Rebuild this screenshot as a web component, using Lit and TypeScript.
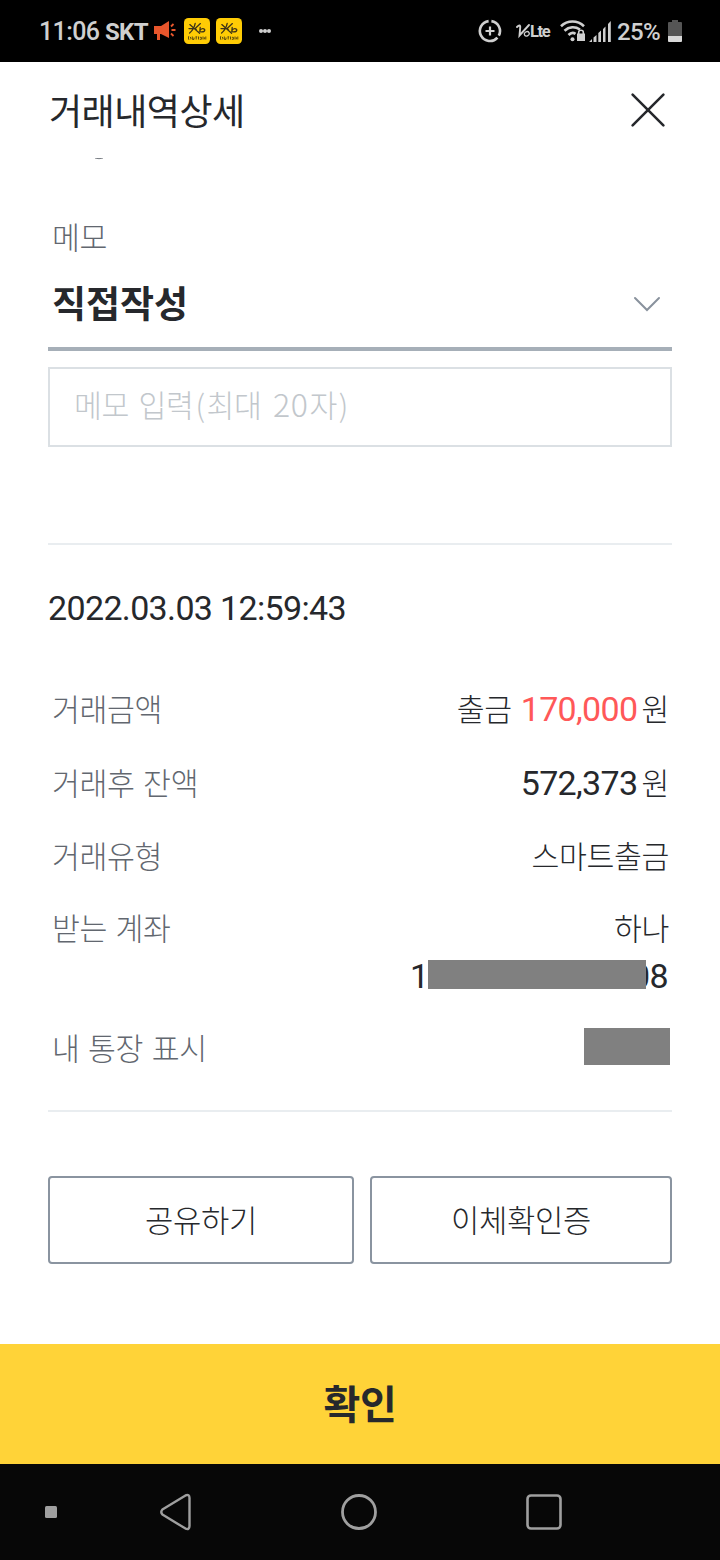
import { LitElement, html, css, svg } from "lit";
import { customElement, property } from "lit/decorators.js";

const kbMark = svg`
  <rect width="26" height="26" rx="4.5" fill="#ffcc05"/>
  <g fill="none" stroke="#3b3218" stroke-width="1.3" stroke-linecap="round" stroke-linejoin="round">
    <path d="M5.8 6.6L15.6 15.2M5 10.6H11.4M11.2 5.4C10.4 9.5 8.6 12.6 5.6 15M16.4 5.6L11.2 10.4L12.4 12"/>
    <path d="M16.2 9.4L15.8 13.6C19.8 14.6 21.6 12.8 20.4 11.2C19 10 17 10.8 16 12.4"/>
  </g>
  <path d="M4.5 18.3V21.6M6 18.8L7 20.2L6 21.5M8.3 18.5V21.4H10V19.5M11.5 18.8H13.2M12.2 19V21.5M14.5 18.5V21.5M15.8 19.3H17.4V21.3H15.8M19 18.5V21.5M20.4 19.3V21.3M21.8 18.5V21.5" fill="none" stroke="#4d400f" stroke-width=".9"/>`;

@customElement("phone-status-bar")
export class PhoneStatusBar extends LitElement {
  static styles = css`
    :host { display: flex; height: 62px; background: #000; color: #cfcfcf; align-items: center;
      font-family: Roboto, sans-serif; font-size: 25px; line-height: 62px; white-space: nowrap; }
    .left, .right { display: flex; align-items: center; height: 62px; }
    .left { padding-left: 39px; flex: 1; }
    .right { padding-right: 38px; }
    .time { width: 66px; font-weight: 500; letter-spacing: -0.6px; padding-top: 2px; }
    .carrier { width: 48px; font-weight: 700; font-size: 24px; letter-spacing: -0.7px; padding-top: 2px; }
    .battery { width: 51px; font-weight: 500; font-size: 24px; letter-spacing: -0.6px; padding-top: 2px; }
    svg { display: block; flex: none; }
    .horn { margin-right: 7px; }
    .kb { margin-right: 6px; }
    .dots { margin-left: 11px; }
    .saver { margin-right: 14px; }
    .lte { width: 30px; font-size: 16.5px; font-weight: 700; letter-spacing: -1.4px; padding-top: 2px; }
    .wifi { margin-right: 4px; }
    .signal { margin-right: 6px; }
  `;
  render() {
    return html`
      <div class="left">
        <span class="time">11:06</span>
        <span class="carrier">SKT</span>
        <svg class="horn" width="24" height="22" viewBox="0 0 24 22">
          <path d="M1 6H8L16 1V18L8 14H7V20H4V14H1Z" fill="#e8562c"/>
          <path d="M18 6.5L20.5 4M18.5 10H22.5M18 13.5L20.5 16" stroke="#e8562c" stroke-width="1.8"/>
        </svg>
        <svg class="kb" width="26" height="26" viewBox="0 0 26 26">${kbMark}</svg>
        <svg class="kb" width="26" height="26" viewBox="0 0 26 26">${kbMark}</svg>
        <svg class="dots" width="12" height="4" viewBox="0 0 12 4">
          <path d="M2 2H10" stroke="#777"/><circle cx="2" cy="2" r="2" fill="#cfcfcf"/><circle cx="6" cy="2" r="2" fill="#cfcfcf"/><circle cx="10" cy="2" r="2" fill="#cfcfcf"/>
        </svg>
      </div>
      <div class="right">
        <svg class="saver" width="24" height="24" viewBox="0 0 24 24" fill="none" stroke="#cfcfcf">
          <path d="M10.6 2.1A10 10 0 1 0 19.4 18.6M13.4 2.1A10 10 0 0 1 20.8 16.7" stroke-width="2.6"/>
          <path d="M12 7.5V16.5M7.5 12H16.5" stroke-width="2.2"/>
        </svg>
        <svg width="14" height="16" viewBox="0 0 14 16">
          <g fill="none" stroke="#cfcfcf" stroke-linecap="round">
            <path d="M1 4C3 2 4.5 2 4.2 4.5L3.5 12.5L13 2" stroke-width="1.9"/>
            <ellipse cx="10.8" cy="10.8" rx="2.5" ry="2.1" transform="rotate(-30 10.8 10.8)" stroke-width="1.3"/>
          </g>
        </svg>
        <span class="lte">Lte</span>
        <svg class="wifi" width="25" height="24" viewBox="0 0 25 24">
          <g fill="none" stroke="#cfcfcf" stroke-width="2.6">
            <path d="M1 7.2C7.5 .9 17.5 .9 24 7.2M4.5 11.7C9 7.6 15 7.2 20 10.5M8.5 16C10.8 13.6 13.4 13.4 15.5 14.8"/>
          </g>
          <circle cx="12.5" cy="20.2" r="2" fill="#cfcfcf"/>
          <path d="M17 14.5H25V22H17Z" fill="#cfcfcf"/>
          <path d="M18.7 15V13.2C18.7 10.5 23.3 10.5 23.3 13.2V15" fill="none" stroke="#cfcfcf" stroke-width="1.6"/>
        </svg>
        <svg class="signal" width="22" height="22" viewBox="0 0 22 22" fill="#cfcfcf">
          <path d="M0 22L3 19V22ZM4.5 17.5L7.5 15V22H4.5ZM9.3 13L12 10.5V22H9.3ZM14 9L16.5 6.5V22H14ZM19 4L21.8 1V22H19Z"/>
        </svg>
        <span class="battery">25%</span>
        <svg width="14" height="22" viewBox="0 0 14 22">
          <path d="M4 0H10V2H13Q14 2 14 3V16H0V3Q0 2 1 2H4Z" fill="#555"/>
          <path d="M0 16H14V21Q14 22 13 22H1Q0 22 0 21Z" fill="#d8d8d8"/>
        </svg>
      </div>`;
  }
}

@customElement("detail-row")
export class DetailRow extends LitElement {
  @property() label = "";
  static styles = css`
    :host { display: flex; justify-content: space-between; align-items: flex-start;
      padding: 0 4px 0 4px; white-space: nowrap; }
    .label { color: #62676f; margin-top: -1px; }
    .value { display: flex; flex-direction: column; align-items: flex-end; }
  `;
  render() {
    return html`<span class="label">${this.label}</span><div class="value"><slot></slot></div>`;
  }
}

@customElement("app-root")
export class AppRoot extends LitElement {
  static styles = css`
    :host { display: flex; flex-direction: column; width: 720px; height: 1560px; overflow: hidden;
      background: #fff; color: #26282c; font-family: "Noto Sans CJK KR", sans-serif;
      font-size: 30.3px; font-weight: 300; letter-spacing: -0.35px; word-spacing: 2.2px; }
    * { box-sizing: border-box; }
    svg { display: block; flex: none; }
    .head { display: flex; height: 96px; padding: 0 54px 0 49px; align-items: center; justify-content: space-between; }
    h1 { margin: 0; font-size: 36px; line-height: 94px; height: 96px; font-weight: 400; letter-spacing: -0.5px; }
    .body { display: flex; flex-direction: column; height: 1186px; padding: 0 48px; }
    .scrolled { margin-left: 46px; }
    .memo-label { height: 60px; line-height: 58px; margin-top: 47px; padding-left: 4px; color: #62676f; }
    .select { display: flex; align-items: center; justify-content: space-between; height: 84px;
      border-bottom: 4px solid #a6afb8; padding: 0 11px 7px 4px; font-size: 37px; font-weight: 600; line-height: 72px; letter-spacing: 0; }
    .select span { margin-top: -3px; }
    .input { height: 80px; margin-top: 16px; border: 2px solid #dbe0e4; padding-left: 24px; line-height: 69px; color: #c2c7cc; word-spacing: 3.2px; }
    .input .digits { letter-spacing: 0.6px; font-size: 32px; margin: 0 1px 0 2px; }
    .input .paren { margin: 0 1.8px; }
    .rule { height: 2px; background: #e9edf0; flex: none; }
    .gap { height: 96px; }
    .date { height: 127px; line-height: 127px; }
    .num { font-family: Roboto, sans-serif; font-size: 34px; font-weight: 400; letter-spacing: -0.65px; word-spacing: 0; }
    .red { color: #ff5858; }
    .r74 { height: 74px; line-height: 74px; }
    .r72 { height: 72px; line-height: 72px; }
    .account { height: 120px; padding-top: 12px; line-height: 48px; }
    .raise { display: block; margin: -1px -1px 1px 0; }
    .amount { display: flex; }
    .amount .num { margin-right: 4px; }
    .amount .kind { margin-right: 9px; }
    .masked { display: block; position: relative; width: 258px; height: 48px; text-align: right; }
    .masked .first { position: absolute; left: 0; }
    .mask { background: #808080; display: block; }
    .mask.number { position: absolute; left: 18px; top: 8px; width: 218px; height: 29px; }
    .mask.name { width: 86px; height: 37px; margin: 16px -2px 0 0; }
    .last { height: 98px; line-height: 73px; }
    .buttons { display: grid; grid-template-columns: 306px 302px; gap: 16px; margin-top: 64px; }
    button { font: inherit; letter-spacing: inherit; color: inherit; margin: 0; padding: 0; background: #fff; }
    .outline { height: 88px; border: 2px solid #8a94a0; border-radius: 4px; font-size: 30.8px; line-height: 80px; padding-bottom: 3px; }
    .confirm { height: 120px; border: 0; background: #ffd338; font-size: 40px; font-weight: 600; line-height: 112px; padding-bottom: 5px; }
    .nav { display: flex; align-items: center; height: 96px; background: #070707; padding-left: 45px; }
    .back { margin-left: 102px; }
    .home { margin-left: 149px; }
    .recent { margin-left: 149px; }
  `;
  render() {
    return html`
      <phone-status-bar></phone-status-bar>
      <div class="head">
        <h1>거래내역상세</h1>
        <svg width="36" height="36" viewBox="0 0 36 36"><path d="M2.6 2.6L33.4 33.4M33.4 2.6L2.6 33.4" stroke="#26282c" stroke-width="2.6" stroke-linecap="round"/></svg>
      </div>
      <div class="body">
        <svg class="scrolled" width="10" height="2" viewBox="0 0 10 2"><path d="M1 0Q5 1.4 9 0" fill="none" stroke="#70757c" stroke-width="1"/></svg>
        <div class="memo-label">메모</div>
        <div class="select"><span>직접작성</span>
          <svg width="28" height="16" viewBox="0 0 28 16"><path d="M2 2L14 14L26 2" fill="none" stroke="#89929d" stroke-width="2" stroke-linecap="round"/></svg>
        </div>
        <div class="input">메모 입력<span class="paren">(</span>최대 <span class="digits">20</span>자<span class="paren">)</span></div>
        <div class="gap"></div>
        <div class="rule"></div>
        <div class="date num">2022.03.03 12:59:43</div>
        <detail-row class="r74" label="거래금액"><span class="amount"><span class="kind raise">출금</span><span class="num red">170,000</span><span class="raise">원</span></span></detail-row>
        <detail-row class="r74" label="거래후 잔액"><span class="amount"><span class="num">572,373</span><span class="raise">원</span></span></detail-row>
        <detail-row class="r72" label="거래유형"><span class="raise">스마트출금</span></detail-row>
        <detail-row class="account" label="받는 계좌"><span class="raise">하나</span>
          <span class="masked num"><span class="first">1</span>08<span class="mask number"></span></span>
        </detail-row>
        <detail-row class="last" label="내 통장 표시"><span class="mask name"></span></detail-row>
        <div class="rule"></div>
        <div class="buttons"><button class="outline">공유하기</button><button class="outline">이체확인증</button></div>
      </div>
      <button class="confirm">확인</button>
      <div class="nav">
        <svg width="12" height="12" viewBox="0 0 12 12"><rect width="12" height="12" rx="1.5" fill="#9f9f9f"/></svg>
        <svg class="back" width="33" height="38" viewBox="0 0 33 38"><path d="M26.5 2.4L3.4 16.5Q1.2 19 3.4 21.5L26.5 35.6Q30.5 37 30.5 33V5Q30.5 1 26.5 2.4Z" fill="none" stroke="#9f9f9f" stroke-width="2.4" stroke-linejoin="round"/></svg>
        <svg class="home" width="36" height="36" viewBox="0 0 36 36"><circle cx="18" cy="18" r="16.5" fill="none" stroke="#9f9f9f" stroke-width="2.8"/></svg>
        <svg class="recent" width="36" height="36" viewBox="0 0 36 36"><rect x="1.5" y="1.5" width="33" height="33" rx="3.5" fill="none" stroke="#9f9f9f" stroke-width="2.6"/></svg>
      </div>`;
  }
}
